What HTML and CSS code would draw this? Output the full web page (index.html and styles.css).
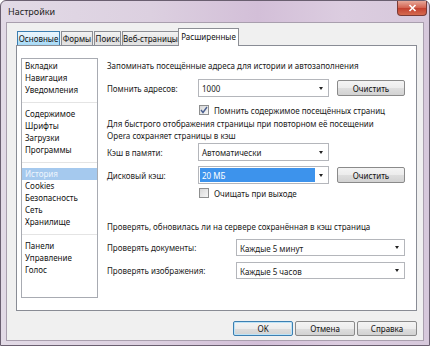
FILE: index.html
```html
<!DOCTYPE html>
<html lang="ru">
<head>
    <meta charset="UTF-8">
    <title>Настройки</title>
    <link rel="stylesheet" href="styles.css">
</head>
<body>

    <div class="window">
        <div class="titlebar">
            <span class="title">Настройки</span>
            <div class="close">
                <svg width="9" height="8" viewBox="0 0 9 8"><path d="M1.5 1 L7.5 7 M7.5 1 L1.5 7" stroke="#fff" stroke-width="1.6"/></svg>
            </div>
        </div>

        <div class="client">
            <div class="tabs">
                <div class="tab hover" style="width:43px">Основные</div>
                <div class="tab" style="width:32px">Формы</div>
                <div class="tab" style="width:27px">Поиск</div>
                <div class="tab" style="width:57px">Веб-страницы</div>
                <div class="tab active" style="width:61px">Расширенные</div>
            </div>

            <div class="panel">
                <ul class="nav">
                    <li>Вкладки</li>
                    <li>Навигация</li>
                    <li>Уведомления</li>
                    <li class="sep"></li>
                    <li>Содержимое</li>
                    <li>Шрифты</li>
                    <li>Загрузки</li>
                    <li>Программы</li>
                    <li class="sep"></li>
                    <li class="selected">История</li>
                    <li>Cookies</li>
                    <li>Безопасность</li>
                    <li>Сеть</li>
                    <li>Хранилище</li>
                    <li class="sep"></li>
                    <li>Панели</li>
                    <li>Управление</li>
                    <li>Голос</li>
                </ul>

                <div class="settings">
                    <p class="heading">Запоминать посещённые адреса для истории и автозаполнения</p>

                    <div class="row row-addr">
                        <span class="label">Помнить адресов:</span>
                        <div class="combo"><span>1000</span><i class="arrow"></i></div>
                        <button class="btn">Очистить</button>
                    </div>

                    <label class="check check-1"><span class="box checked">
                        <svg width="8" height="8" viewBox="0 0 8 8"><path d="M1 4 L3 6.5 L7 1" fill="none" stroke="#4a5f8f" stroke-width="1.4"/></svg>
                    </span>Помнить содержимое посещённых страниц</label>

                    <p class="para">Для быстрого отображения страницы при повторном её посещении<br>Opera сохраняет страницы в кэш</p>

                    <div class="row row-mem">
                        <span class="label">Кэш в памяти:</span>
                        <div class="combo"><span>Автоматически</span><i class="arrow"></i></div>
                    </div>

                    <div class="row row-disk">
                        <span class="label">Дисковый кэш:</span>
                        <div class="combo focused"><span class="sel">20 МБ</span><i class="arrow"></i></div>
                        <button class="btn">Очистить</button>
                    </div>

                    <label class="check check-2"><span class="box"></span>Очищать при выходе</label>

                    <p class="para para-2">Проверять, обновилась ли на сервере сохранённая в кэш страница</p>

                    <div class="row row-wide row-docs">
                        <span class="label">Проверять документы:</span>
                        <div class="combo"><span>Каждые 5 минут</span><i class="arrow"></i></div>
                    </div>

                    <div class="row row-wide row-imgs">
                        <span class="label">Проверять изображения:</span>
                        <div class="combo"><span>Каждые 5 часов</span><i class="arrow"></i></div>
                    </div>
                </div>
            </div>

            <div class="buttons">
                <button class="btn btn-default">OK</button>
                <button class="btn">Отмена</button>
                <button class="btn">Справка</button>
            </div>
        </div>
    </div>

</body>
</html>
```

FILE: styles.css
```css
body {
    margin: 0;
    background: #fff;
    font-family: "Noto Sans", "Open Sans", sans-serif;
    font-size: 8px;
    color: #1a1a1a;
}
.window {
    width: 430px;
    height: 346px;
    box-sizing: border-box;
    border: 1px solid #6a5f70;
    border-radius: 6px 6px 0 0;
    padding: 0 5px 4px;
    background: linear-gradient(90deg, #e2dae6 0%, #dcd0e0 35%, #d3bfd8 60%, #dccde0 80%, #d6c8db 100%);
}
.titlebar {
    height: 21px;
    display: flex;
    justify-content: space-between;
    align-items: flex-start;
}
.title {
    padding-left: 2px;
    line-height: 21px;
    font-size: 9px;
    color: #222;
}
.close {
    width: 30px;
    height: 15px;
    margin-right: -3px;
    box-sizing: border-box;
    border: 1px solid #7a3a35;
    border-top: none;
    border-radius: 0 0 4px 4px;
    background: linear-gradient(#e7a899, #d2604e 50%, #c2402f 51%, #d56a4f);
    display: flex;
    align-items: center;
    justify-content: center;
}
.client {
    height: 319px;
    box-sizing: border-box;
    border: 1px solid #a99fae;
    background: #f0f0f0;
    padding: 5px 6px 0 9px;
}
.tabs {
    height: 17px;
    display: flex;
    align-items: flex-end;
}
.tab {
    height: 14px;
    box-sizing: border-box;
    margin-left: 1px;
    border: 1px solid #8c8e94;
    border-bottom: none;
    background: linear-gradient(#f3f3f3, #e6e6e6 50%, #dadada 51%, #e4e4e4);
    text-align: center;
    line-height: 13px;
    white-space: nowrap;
    color: #111;
}
.tab.hover {
    background: linear-gradient(#eaf5fd, #d9effc 50%, #bee6fd 51%, #a7d9f5);
    border-color: #3c7fb1;
}
.tab.active {
    height: 18px;
    margin-left: -1px;
    margin-bottom: -1px;
    background: #fff;
    line-height: 15px;
    position: relative;
    z-index: 1;
}
.panel {
    height: 266px;
    box-sizing: border-box;
    border: 1px solid #898c95;
    background: #fff;
    display: flex;
    padding: 12px 0 0 4px;
}
.nav {
    list-style: none;
    margin: 0;
    padding: 1px 0 0;
    width: 77px;
    height: 240px;
    box-sizing: border-box;
    border: 1px solid #a8abb2;
}
.nav li {
    height: 12px;
    line-height: 12px;
    padding-left: 3px;
    color: #111;
}
.nav li.sep {
    position: relative;
}
.nav li.sep::after {
    content: "";
    position: absolute;
    left: 0;
    right: 0;
    top: 6px;
    border-top: 1px solid #e4e4e4;
}
.nav li.selected {
    background: #a5c9ee;
    color: #eef5fd;
}
.settings {
    margin-left: 9px;
    padding-top: 2px;
    display: flex;
    flex-direction: column;
}
.heading, .para {
    margin: 0;
    line-height: 12px;
}
.para {
    margin-top: 2px;
}
.para-2 {
    margin-top: 22px;
}
.row {
    display: flex;
    align-items: center;
    height: 18px;
}
.label {
    width: 91px;
    flex-shrink: 0;
}
.combo {
    width: 131px;
    height: 18px;
    box-sizing: border-box;
    border: 1px solid #b4b6bb;
    background: #fff;
    display: flex;
    align-items: center;
    padding: 1px;
}
.combo span {
    flex: 1;
    height: 100%;
    line-height: 15px;
    padding-left: 2px;
}
.combo .sel {
    background: #3d93ec;
    color: #fff;
}
.arrow {
    width: 0;
    height: 0;
    margin: 0 4px 0 4px;
    border-left: 2.5px solid transparent;
    border-right: 2.5px solid transparent;
    border-top: 3px solid #222;
}
.btn {
    width: 68px;
    height: 16px;
    margin-left: 8px;
    padding: 0;
    box-sizing: border-box;
    border: 1px solid #8a8a8a;
    border-radius: 2px;
    background: linear-gradient(#f4f4f4, #ececec 50%, #dedede 51%, #d2d2d2);
    font-family: inherit;
    font-size: 8px;
    color: #111;
}
.row-addr {
    margin-top: 7px;
}
.check {
    display: flex;
    align-items: center;
    height: 12px;
    padding-left: 92px;
}
.check-1 {
    margin-top: 7px;
}
.check-2 {
    margin-top: 3px;
}
.box {
    width: 10px;
    height: 10px;
    box-sizing: border-box;
    border: 1px solid #8e8f8f;
    background: linear-gradient(135deg, #d8d8d8, #f6f6f6);
    margin-right: 5px;
    display: flex;
    align-items: center;
    justify-content: center;
}
.row-mem {
    margin-top: 1px;
}
.row-disk {
    margin-top: 5px;
}
.row-wide {
    height: 17px;
}
.row-wide .label {
    width: 129px;
}
.row-wide .combo {
    width: 169px;
    height: 17px;
}
.row-docs {
    margin-top: 6px;
}
.row-imgs {
    margin-top: 6px;
}
.buttons {
    display: flex;
    justify-content: flex-end;
    gap: 2px;
    margin-top: 10px;
}
.buttons .btn {
    width: 60px;
    height: 15px;
    margin-left: 0;
}
.btn-default {
    border-color: #3c7fb1;
    box-shadow: inset 0 0 0 1px #bde3f7;
}
```
